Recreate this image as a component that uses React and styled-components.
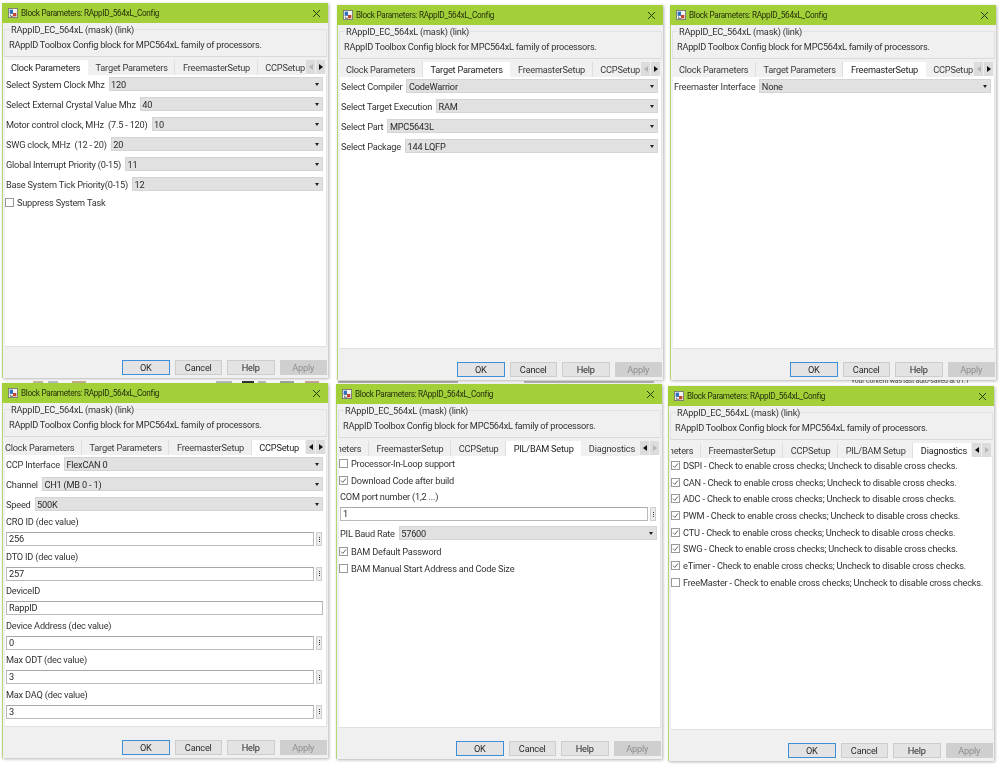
import React from "react";
import styled, { createGlobalStyle } from "styled-components";

const Global = createGlobalStyle`
  html, body { margin: 0; padding: 0; background: #fff; }
  #root { width: 999px; height: 765px; }
`;

const Desktop = styled.div`
  position: relative;
  width: 999px;
  height: 765px;
  overflow: hidden;
  background: #fff;
  filter: blur(0.35px);
  font-family: "Roboto", "Noto Sans", sans-serif;
  font-size: 9.2px;
  letter-spacing: -0.2px;
  color: #333;
`;

const Win = styled.section`
  position: absolute;
  left: ${(p) => p.$x}px;
  top: ${(p) => p.$y}px;
  width: 326px;
  height: 375px;
  box-sizing: border-box;
  display: flex;
  flex-direction: column;
  background: #f0f0f0;
  border-left: 1px solid #b5d77a;
  box-shadow: 1px 1px 3px rgba(0, 0, 0, 0.3);
`;

const TitleBar = styled.header`
  flex: 0 0 20px;
  margin-left: -1px;
  display: flex;
  align-items: center;
  padding: 0 7px 0 6px;
  gap: 3px;
  background: #a3d039;
  color: #23300c;
  font-size: 8.2px;
  letter-spacing: -0.3px;
`;
const TitleText = styled.span`
  flex: 1;
  white-space: nowrap;
`;

const Group = styled.div`
  position: relative;
  flex: 0 0 37px;
  min-height: 0;
  box-sizing: border-box;
  margin: 0 1px;
  padding: 0 0 0 6px;
  line-height: 14px;
  white-space: nowrap;
`;
const GroupFrame = styled.div`
  position: absolute;
  left: 0;
  right: 0;
  top: 6px;
  bottom: 3px;
  border: 1px solid #e2e2e2;
  border-bottom-color: #dadada;
`;
const Legend = styled.div`
  position: relative;
  display: table;
  padding: 0 1px;
  background: #f0f0f0;
`;
const Desc = styled.div`
  position: relative;
  margin: 1px 0 0 -1px;
  letter-spacing: -0.25px;
`;

const TabRow = styled.div`
  flex: 0 0 14px;
  min-height: 0;
  display: flex;
  margin: 0 1px 0 2px;
  position: relative;
  z-index: 1;
`;
const TabViewport = styled.div`
  flex: 0 0 300px;
  height: 15px;
  overflow: hidden;
`;
const TabStrip = styled.div`
  display: flex;
  width: max-content;
  margin-left: ${(p) => -p.$scroll}px;
`;
const Tab = styled.div`
  height: 15px;
  line-height: 15px;
  padding: 0 7.6px;
  white-space: nowrap;
  background: ${(p) => (p.$active ? "#fff" : "#f0f0f0")};
  box-shadow: ${(p) => (p.$active ? "none" : "inset -1px 0 0 #dedede")};
  color: ${(p) => (p.$active ? "#222" : "#3a3a3a")};
  &:first-child {
    padding-left: 6px;
  }
`;
const Arrows = styled.div`
  display: flex;
  margin-left: 1px;
  gap: 1px;
`;
const ArrowBtn = styled.div`
  width: 9px;
  height: 14px;
  background: #dcdcdc;
  display: flex;
  align-items: center;
  justify-content: center;
  color: ${(p) => (p.$off ? "#b4b4b4" : "#111")};
`;

const Panel = styled.main`
  flex: 0 0 273px;
  box-sizing: border-box;
  margin: 0 1px 0 2px;
  background: #fff;
  border-bottom: 1px solid #e0e0e0;
  border-right: 1px solid #e4e4e4;
  padding: 0 3px 0 1px;
`;

const Row = styled.div`
  display: flex;
  align-items: center;
  height: 20px;
  gap: 4px;
  white-space: pre;
`;
const Select = styled.div`
  flex: 1;
  height: 14px;
  box-sizing: border-box;
  display: flex;
  align-items: center;
  justify-content: space-between;
  padding: 0 3px 0 1.5px;
  background: #e1e1e1;
  border: 1px solid #d4d4d4;
  color: #2a2a2a;
`;
const Caret = styled.span`
  width: 0;
  height: 0;
  border-left: 2px solid transparent;
  border-right: 2px solid transparent;
  border-top: 3px solid #222;
`;

const FieldLabel = styled.div`
  height: ${(p) => p.$h || 16}px;
  line-height: ${(p) => p.$h || 16}px;
  white-space: nowrap;
`;
const FieldRow = styled.div`
  display: flex;
  align-items: center;
  height: ${(p) => p.$h || 18}px;
  gap: 2px;
`;
const Input = styled.div`
  flex: 1;
  height: 14px;
  box-sizing: border-box;
  padding-left: 2px;
  line-height: 12px;
  background: #fff;
  border: 1px solid #b9b9b9;
  border-top-color: #a8a8a8;
  color: #2a2a2a;
`;
const Stepper = styled.div`
  width: 6px;
  height: 14px;
  margin-right: 1px;
  background: #ececec;
  border: 1px solid #cfcfcf;
  box-sizing: border-box;
  display: flex;
  flex-direction: column;
  align-items: center;
  justify-content: center;
  gap: 1px;
  & > i {
    width: 1px;
    height: 1px;
    background: #333;
  }
`;

const CheckRow = styled.div`
  display: flex;
  align-items: center;
  height: 16.7px;
  gap: 3px;
  white-space: nowrap;
`;
const Box = styled.span`
  flex: 0 0 9px;
  width: 9px;
  height: 9px;
  margin-left: -1px;
  box-sizing: border-box;
  background: #fff;
  border: 1px solid #999;
  display: flex;
`;

const Footer = styled.footer`
  flex: 1;
  display: flex;
  justify-content: flex-end;
  align-items: flex-end;
  gap: 5px;
  padding: 0 1px 3px 0;
`;
const Btn = styled.div`
  width: 47.5px;
  height: 15px;
  box-sizing: border-box;
  display: flex;
  align-items: center;
  justify-content: center;
  background: ${(p) => (p.$off ? "#cfcfcf" : "#e3e3e3")};
  border: 1px solid ${(p) => (p.$primary ? "#3c8fd8" : p.$off ? "#cfcfcf" : "#cdcdcd")};
  color: ${(p) => (p.$off ? "#8e8e8e" : "#2a2a2a")};
`;

const Stray = styled.div`
  position: absolute;
  left: ${(p) => p.$x}px;
  top: ${(p) => p.$y}px;
  font-size: 7px;
  line-height: 8px;
  color: #555;
  white-space: nowrap;
`;
const Sliver = styled.i`
  position: absolute;
  left: ${(p) => p.$x}px;
  top: 381px;
  width: ${(p) => p.$w}px;
  height: 2px;
  background: ${(p) => p.$c};
`;

const AppIcon = () => (
  <svg width="10" height="10" viewBox="0 0 12 12">
    <rect x="0.5" y="0.5" width="11" height="11" fill="#f4f4f4" stroke="#6f6f6f" />
    <rect x="2" y="2" width="4" height="5" fill="#2d6fb8" />
    <rect x="6" y="6" width="4" height="4" fill="#c9442e" />
    <path d="M3 8v2h3" fill="none" stroke="#555" />
  </svg>
);
const CloseIcon = () => (
  <svg width="9" height="9" viewBox="0 0 9 9">
    <path d="M1 1l7 7M8 1L1 8" stroke="#2b3a10" strokeWidth="1" fill="none" />
  </svg>
);
const Tick = () => (
  <svg width="7" height="7" viewBox="0 0 7 7">
    <path d="M1 3.6l1.8 1.8L6 1.4" stroke="#666" strokeWidth="1" fill="none" />
  </svg>
);
const Tri = ({ dir }) => (
  <svg width="4" height="6" viewBox="0 0 4 6">
    <path d={dir === "l" ? "M4 0v6L0 3z" : "M0 0v6l4-3z"} fill="currentColor" />
  </svg>
);

const TABS = ["Clock Parameters", "Target Parameters", "FreemasterSetup", "CCPSetup", "PIL/BAM Setup", "Diagnostics"];

const SLIVERS = [
  [33, 10, "#c8bda0"],
  [48, 10, "#b9c4c9"],
  [72, 14, "#c9b48f"],
  [216, 16, "#b7bcc2"],
  [242, 12, "#333"],
  [258, 8, "#bbb"],
  [280, 14, "#9fa7a0"],
  [305, 14, "#c9a7a0"],
  [338, 120, "#b4b4ae"],
  [524, 130, "#bcbcb8"],
];

const Drop = ({ label, value }) => (
  <Row>
    <span>{label}</span>
    <Select>
      <span>{value}</span>
      <Caret />
    </Select>
  </Row>
);
const Check = ({ label, on }) => (
  <CheckRow>
    <Box>{on && <Tick />}</Box>
    <span>{label}</span>
  </CheckRow>
);
const Field = ({ value, plain, h }) => (
  <FieldRow $h={h}>
    <Input>{value}</Input>
    {!plain && (
      <Stepper>
        <i />
        <i />
        <i />
      </Stepper>
    )}
  </FieldRow>
);
const Num = ({ label, value, plain }) => (
  <>
    <FieldLabel>{label}</FieldLabel>
    <Field value={value} plain={plain} h={18.5} />
  </>
);

const Window = ({ x, y, active, scroll = 0, left = false, right = true, children }) => (
  <Win $x={x} $y={y}>
    <TitleBar>
      <AppIcon />
      <TitleText>Block Parameters: RAppID_564xL_Config</TitleText>
      <CloseIcon />
    </TitleBar>
    <Group>
      <GroupFrame />
      <Legend>RAppID_EC_564xL (mask) (link)</Legend>
      <Desc>RAppID Toolbox Config block for MPC564xL family of processors.</Desc>
    </Group>
    <TabRow>
      <TabViewport>
        <TabStrip $scroll={scroll}>
          {TABS.map((t) => (
            <Tab key={t} $active={t === active}>
              {t}
            </Tab>
          ))}
        </TabStrip>
      </TabViewport>
      <Arrows>
        <ArrowBtn $off={!left}>
          <Tri dir="l" />
        </ArrowBtn>
        <ArrowBtn $off={!right}>
          <Tri dir="r" />
        </ArrowBtn>
      </Arrows>
    </TabRow>
    <Panel>{children}</Panel>
    <Footer>
      <Btn $primary>OK</Btn>
      <Btn>Cancel</Btn>
      <Btn>Help</Btn>
      <Btn $off>Apply</Btn>
    </Footer>
  </Win>
);

const DIAG = [
  ["DSPI", true],
  ["CAN", true],
  ["ADC", true],
  ["PWM", true],
  ["CTU", true],
  ["SWG", true],
  ["eTimer", true],
  ["FreeMaster", false],
];

export default function App() {
  return (
    <Desktop>
      <Global />
      {SLIVERS.map(([x, w, c]) => (
        <Sliver key={x} $x={x} $w={w} $c={c} />
      ))}
      <Stray $x={851} $y={377}>Your content was last auto-saved at 01:1</Stray>

      <Window x={2} y={3} active="Clock Parameters">
        <Drop label="Select System Clock Mhz" value="120" />
        <Drop label="Select External Crystal Value Mhz" value="40" />
        <Drop label="Motor control clock, MHz  (7.5 - 120)" value="10" />
        <Drop label="SWG clock, MHz  (12 - 20)" value="20" />
        <Drop label="Global Interrupt Priority (0-15)" value="11" />
        <Drop label="Base System Tick Priority(0-15)" value="12" />
        <Check label="Suppress System Task" />
      </Window>

      <Window x={337} y={5} active="Target Parameters">
        <Drop label="Select Compiler" value="CodeWarrior" />
        <Drop label="Select Target Execution" value="RAM" />
        <Drop label="Select Part" value="MPC5643L" />
        <Drop label="Select Package" value="144 LQFP" />
      </Window>

      <Window x={670} y={5} active="FreemasterSetup">
        <Drop label="Freemaster Interface" value="None" />
      </Window>

      <Window x={2} y={383} active="CCPSetup" scroll={6} left>
        <Drop label="CCP Interface" value="FlexCAN 0" />
        <Drop label="Channel" value="CH1 (MB 0 - 1)" />
        <Drop label="Speed" value="500K" />
        <Num label="CRO ID (dec value)" value="256" />
        <Num label="DTO ID (dec value)" value="257" />
        <Num label="DeviceID" value="RappID" plain />
        <Num label="Device Address (dec value)" value="0" />
        <Num label="Max ODT (dec value)" value="3" />
        <Num label="Max DAQ (dec value)" value="3" />
      </Window>

      <Window x={336} y={384} active="PIL/BAM Setup" scroll={140.5} left right={false}>
        <Check label="Processor-In-Loop support" />
        <Check label="Download Code after build" on />
        <FieldLabel $h={17}>COM port number (1,2 ...)</FieldLabel>
        <Field value="1" />
        <Drop label="PIL Baud Rate" value="57600" />
        <Check label="BAM Default Password" on />
        <Check label="BAM Manual Start Address and Code Size" />
      </Window>

      <Window x={668} y={386} active="Diagnostics" scroll={140.5} left right={false}>
        {DIAG.map(([n, on]) => (
          <Check key={n} on={on} label={`${n} - Check to enable cross checks; Uncheck to disable cross checks.`} />
        ))}
      </Window>
    </Desktop>
  );
}
